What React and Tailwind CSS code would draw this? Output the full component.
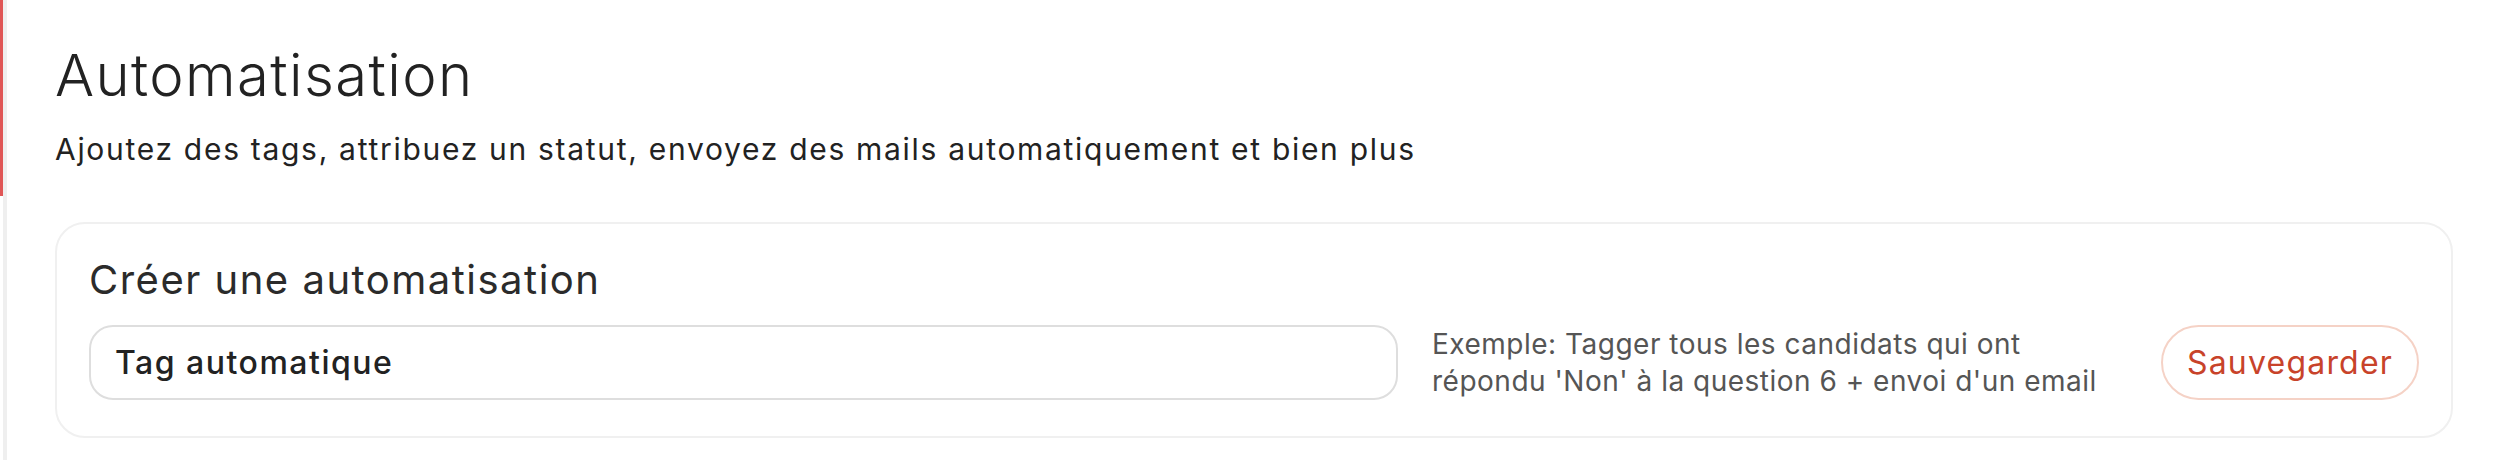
export default function App() {
  return (
    <div className="flex min-h-[460px] bg-white font-['Inter','Liberation_Sans',sans-serif] text-[#222]">
      <div className="w-[3px] shrink-0">
        <div className="h-[196px] bg-[#e05656]"></div>
      </div>
      <div className="w-[4px] shrink-0 bg-[#efefef]"></div>

      <div className="flex-1 pl-[48px] pr-[47px] pt-[46px]">
        <h1 className="text-[58px] leading-none font-light tracking-[1.4px] text-[#222]">Automatisation</h1>
        <p className="mt-[30px] text-[30px] leading-none tracking-[1.7px] text-[#222]">
          Ajoutez des tags, attribuez un statut, envoyez des mails automatiquement et bien plus
        </p>

        <div className="mt-[58px] rounded-[30px] border-2 border-[#f0f0f0] pt-[36px] pb-[36px] px-[32px]">
          <h2 className="text-[40px] leading-none tracking-[1.5px] text-[#2b2b2b]">Créer une automatisation</h2>
          <div className="mt-[25px] flex items-center gap-[34px]">
            <input
              type="text"
              defaultValue="Tag automatique"
              className="h-[75px] flex-1 rounded-[24px] border-2 border-[#dedede] bg-white px-[24px] text-[32px] font-medium tracking-[1.5px] text-[#222] outline-none"
            />
            <p className="w-[695px] shrink-0 text-[28px] leading-[37px] tracking-[0.5px] text-[#555]">
              Exemple: Tagger tous les candidats qui ont répondu 'Non' à la question 6 + envoi d'un email
            </p>
            <button className="h-[75px] w-[258px] shrink-0 rounded-full border-2 border-[#f5d2c6] bg-white text-[32px] tracking-[1.2px] text-[#c8432a]">
              Sauvegarder
            </button>
          </div>
        </div>
      </div>
    </div>
  );
}
